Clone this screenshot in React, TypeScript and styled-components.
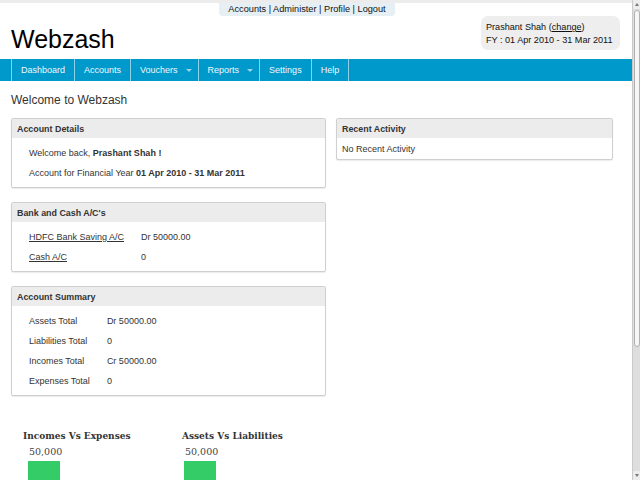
import React from "react";
import styled, { createGlobalStyle } from "styled-components";

const Global = createGlobalStyle`
  body {
    margin: 0;
    font-family: "Liberation Sans", Arial, sans-serif;
    font-size: 9px;
    color: #333;
    background: #fff;
  }
`;

const Page = styled.div`
  min-height: 680px;
  margin-right: 8px;
`;

/* imitation of the browser's scrollbar, fixed over the right edge */
const ScrollRail = styled.div`
  position: fixed;
  top: 0;
  right: 0;
  width: 8px;
  height: 100vh;
  background: #dedede;
  border-left: 1px solid #cacaca;
  box-sizing: border-box;
  display: flex;
  flex-direction: column;
  align-items: center;
`;

const ScrollArrow = styled.div<{ $down?: boolean }>`
  height: 9px;
  width: 100%;
  display: flex;
  align-items: center;
  justify-content: center;
  background: #ececec;
  &::after {
    content: "";
    border-left: 2px solid transparent;
    border-right: 2px solid transparent;
    ${(p) =>
      p.$down ? "border-top: 3px solid #777;" : "border-bottom: 3px solid #777;"}
  }
`;

const ScrollThumb = styled.div`
  width: 6px;
  height: 337px;
  background: #f6f6f6;
  border: 1px solid #b0b0b0;
  border-radius: 3px;
  box-sizing: border-box;
  margin-top: 1px;
`;

const ScrollSpace = styled.div`
  flex: 1;
`;

const TopStrip = styled.div`
  height: 3px;
  background: #ececec;
`;

const TopLinks = styled.div`
  margin-left: 219px;
  width: 176px;
  height: 13px;
  line-height: 12px;
  background: #e6eff3;
  border-radius: 0 0 4px 4px;
  text-align: center;
  font-size: 9.2px;
  color: #111;
`;

const HeaderRow = styled.div`
  display: flex;
  justify-content: space-between;
  align-items: flex-start;
  height: 43px;
  padding: 0 12px 0 11px;
`;

const Title = styled.h1`
  margin: 0;
  padding-top: 11px;
  font-size: 25px;
  line-height: 25px;
  font-weight: normal;
  color: #000;
`;

const UserBox = styled.div`
  background: #eeeeee;
  border-radius: 7px;
  padding: 5px 6px 3px 5px;
  line-height: 13px;
  font-size: 9.1px;
  color: #111;
  width: 128px;
`;

const Link = styled.a`
  color: inherit;
  text-decoration: underline;
`;

const Nav = styled.nav`
  height: 22px;
  background: #0099cc;
  display: flex;
  padding-left: 11px;
`;

const NavList = styled.ul`
  display: flex;
  margin: 0;
  padding: 0;
  list-style: none;
  border-left: 1px solid rgba(255, 255, 255, 0.55);
`;

const NavItem = styled.li`
  display: flex;
  align-items: center;
  padding: 0 9px;
  border-right: 1px solid rgba(255, 255, 255, 0.55);
  color: #f2f8fb;
  font-size: 9px;
`;

const Caret = styled.span`
  margin: 0 -3px 0 8px;
  width: 0;
  height: 0;
  border-left: 3px solid transparent;
  border-right: 3px solid transparent;
  border-top: 3px solid rgba(255, 255, 255, 0.6);
`;

const Main = styled.main`
  padding: 12px 0 0 11px;
`;

const Heading = styled.h2`
  margin: 0 0 11px;
  font-size: 12px;
  line-height: 14px;
  font-weight: normal;
  color: #333;
`;

const Columns = styled.div`
  display: grid;
  grid-template-columns: 315px 277px;
  column-gap: 10px;
  align-items: start;
`;

const Stack = styled.div`
  display: flex;
  flex-direction: column;
  gap: 14px;
`;

const Panel = styled.section`
  border: 1px solid #cfcfcf;
  border-radius: 2px;
  box-shadow: 0 1px 1px rgba(0, 0, 0, 0.08);
  background: #fff;
`;

const PanelHead = styled.div`
  background: #ececec;
  height: 19px;
  line-height: 21px;
  padding-left: 5px;
  font-weight: bold;
  font-size: 8.9px;
  color: #333;
`;

const PanelBody = styled.div<{ $plain?: boolean }>`
  padding: ${(p) => (p.$plain ? "1px 5px 0" : "5px 17px 4px")};
  line-height: 20px;
`;

const Line = styled.div``;

const Table = styled.table`
  border-collapse: collapse;
  td {
    padding: 0 17px 0 0;
    height: 20px;
    white-space: nowrap;
  }
`;

const Charts = styled.div`
  display: flex;
  padding: 34px 0 0 23px;
`;

const Chart = styled.div`
  width: 159px;
`;

const ChartTitle = styled.div`
  font-family: "DejaVu Serif", serif;
  font-weight: bold;
  font-size: 9px;
  line-height: 12px;
  color: #333;
`;

const ChartSvg = styled.svg`
  display: block;
`;

const ChartBlock = ({
  title,
  value,
  shift,
}: {
  title: string;
  value: string;
  shift: number;
}) => (
  <Chart>
    <ChartTitle>{title}</ChartTitle>
    <ChartSvg width="150" height="200" viewBox="0 0 150 200">
      <text
        x={shift + 1}
        y="13"
        fontFamily="DejaVu Serif, serif"
        fontSize="9.5"
        fill="#444"
      >
        {value}
      </text>
      <rect x={shift} y="19" width="32" height="180" fill="#33cc66" />
    </ChartSvg>
  </Chart>
);

export default function App() {
  return (
    <Page>
      <Global />
      <ScrollRail>
        <ScrollArrow />
        <ScrollThumb />
        <ScrollSpace />
        <ScrollArrow $down />
      </ScrollRail>
      <TopStrip />
      <TopLinks>Accounts | Administer | Profile | Logout</TopLinks>
      <HeaderRow>
        <Title>Webzash</Title>
        <UserBox>
          <div>
            Prashant Shah (<Link href="#">change</Link>)
          </div>
          <div>FY : 01 Apr 2010 - 31 Mar 2011</div>
        </UserBox>
      </HeaderRow>
      <Nav>
        <NavList>
          <NavItem>Dashboard</NavItem>
          <NavItem>Accounts</NavItem>
          <NavItem>
            Vouchers<Caret />
          </NavItem>
          <NavItem>
            Reports<Caret />
          </NavItem>
          <NavItem>Settings</NavItem>
          <NavItem>Help</NavItem>
        </NavList>
      </Nav>
      <Main>
        <Heading>Welcome to Webzash</Heading>
        <Columns>
          <Stack>
            <Panel>
              <PanelHead>Account Details</PanelHead>
              <PanelBody>
                <Line>
                  Welcome back, <b>Prashant Shah !</b>
                </Line>
                <Line>
                  Account for Financial Year <b>01 Apr 2010 - 31 Mar 2011</b>
                </Line>
              </PanelBody>
            </Panel>
            <Panel>
              <PanelHead>Bank and Cash A/C's</PanelHead>
              <PanelBody>
                <Table>
                  <tbody>
                    <tr>
                      <td>
                        <Link href="#">HDFC Bank Saving A/C</Link>
                      </td>
                      <td>Dr 50000.00</td>
                    </tr>
                    <tr>
                      <td>
                        <Link href="#">Cash A/C</Link>
                      </td>
                      <td>0</td>
                    </tr>
                  </tbody>
                </Table>
              </PanelBody>
            </Panel>
            <Panel>
              <PanelHead>Account Summary</PanelHead>
              <PanelBody>
                <Table>
                  <tbody>
                    <tr>
                      <td>Assets Total</td>
                      <td>Dr 50000.00</td>
                    </tr>
                    <tr>
                      <td>Liabilities Total</td>
                      <td>0</td>
                    </tr>
                    <tr>
                      <td>Incomes Total</td>
                      <td>Cr 50000.00</td>
                    </tr>
                    <tr>
                      <td>Expenses Total</td>
                      <td>0</td>
                    </tr>
                  </tbody>
                </Table>
              </PanelBody>
            </Panel>
          </Stack>
          <Panel>
            <PanelHead>Recent Activity</PanelHead>
            <PanelBody $plain>No Recent Activity</PanelBody>
          </Panel>
        </Columns>
      </Main>
      <Charts>
        <ChartBlock title="Incomes Vs Expenses" value="50,000" shift={5} />
        <ChartBlock title="Assets Vs Liabilities" value="50,000" shift={2} />
      </Charts>
    </Page>
  );
}
